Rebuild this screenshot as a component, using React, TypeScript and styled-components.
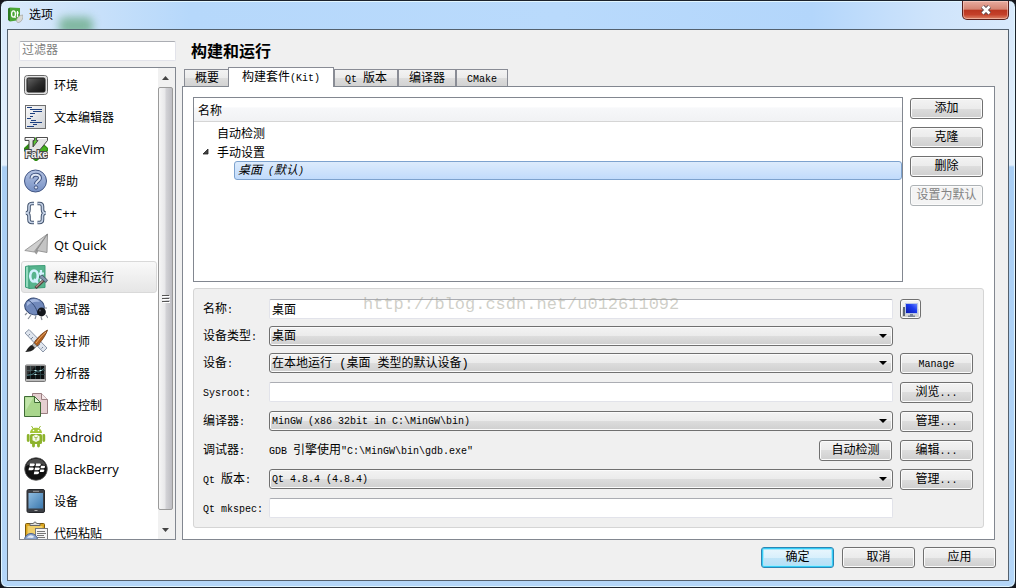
import React, { useState } from 'react';
import styled, { createGlobalStyle, css } from 'styled-components';

const CJK = '"Noto Sans CJK SC"';
const BODY_FONT = `"Liberation Mono", ${CJK}, monospace`;
const NAV_FONT = `"Open Sans", ${CJK}, sans-serif`;

const GlobalStyle = createGlobalStyle`
  *, *::before, *::after { box-sizing: border-box; }
  body { margin: 0; background: #15161c; color: #000; font: 12px/18px ${BODY_FONT}; }
  button, input, select { font: inherit; color: inherit; margin: 0; }
`;

/* ---------- mixed Chinese / Latin text ---------- */

const Latin = styled.span`
  font-size: 10px;
  white-space: pre;
`;

const isHan = (part: string) => /[\u3400-\u9fff]/.test(part);

function Mixed({ children }: { children: string }) {
  const parts = children.split(/([\u3400-\u9fff]+)/).filter(Boolean);
  return (
    <span>
      {parts.map((part, i) => (isHan(part) ? part : <Latin key={i}>{part}</Latin>))}
    </span>
  );
}

/* ---------- window frame ---------- */

const Frame = styled.div`
  display: flex;
  flex-direction: column;
  height: 100vh;
  min-height: 480px;
  min-width: 720px;
  padding: 0 6px 6px;
  border: 1px solid #1b222c;
  border-radius: 7px;
  background:
    linear-gradient(90deg, #dcebfb 0, #c9e1fa 90px, #b6d8fb 190px, #b9dafc 55%, #b3d6fb 80%, #cfe4fb 92%, #d9eafc 100%) top / 100% 28px no-repeat,
    linear-gradient(180deg, #d6e8fb 0, #e4f0fc 164px, #a9cef4 166px, #b4d6f8 100%);
  box-shadow: inset 0 0 0 1px #e2f6ff;
`;

const TitleBar = styled.header`
  position: relative;
  display: flex;
  align-items: center;
  flex: none;
  gap: 6px;
  height: 28px;
  overflow: hidden;
`;

const Smear = styled.span`
  position: absolute;
  left: 52px;
  top: 16px;
  width: 34px;
  height: 18px;
  background: #6fae8c;
  border-radius: 6px;
  filter: blur(4px);
  opacity: 0.8;
`;

const Title = styled.h1`
  position: relative;
  margin: 0;
  flex: 1;
  font: 12px/18px ${NAV_FONT};
`;

const CloseButton = styled.button`
  display: flex;
  align-items: center;
  justify-content: center;
  align-self: flex-start;
  width: 47px;
  height: 19px;
  padding: 0;
  border: 1px solid #571f1c;
  border-top: 0;
  border-radius: 0 0 5px 5px;
  background: linear-gradient(180deg, #e8aca0 0, #d58472 46%, #b93520 50%, #c4402a 75%, #dd8468 100%);
  box-shadow: inset 0 0 0 1px rgba(255, 220, 210, 0.5);
`;

const Dialog = styled.main`
  display: flex;
  flex-direction: column;
  flex: 1;
  min-height: 0;
  gap: 7px;
  padding: 11px 12px 12px 11px;
  border: 1px solid #54616e;
  background: #f0f0f0;
`;

const Body = styled.div`
  display: flex;
  flex: 1;
  min-height: 0;
  gap: 6px;
`;

const Footer = styled.footer`
  display: flex;
  flex: none;
  justify-content: flex-end;
  gap: 8px;
`;

/* ---------- controls ---------- */

const face = css`
  border: 1px solid #707070;
  border-radius: 3px;
  background: linear-gradient(180deg, #f3f3f3 0, #ebebeb 50%, #dddddd 50%, #cfcfcf 100%);
  box-shadow: inset 0 0 0 1px #fbfbfb;
`;

const Button = styled.button<{ $primary?: boolean }>`
  ${face}
  width: 73px;
  height: 21px;
  padding: 1px 0 0;
  line-height: 18px;
  white-space: nowrap;
  ${(p) =>
    p.$primary &&
    css`
      border-color: #2b86b4;
      background: linear-gradient(180deg, #eaf6fd 0, #d9f0fc 50%, #c2e5f8 50%, #b4dff6 100%);
      box-shadow: inset 0 0 0 1px #35cdf7, inset 0 0 0 2px #a5e8fb;
    `}
  &:disabled {
    border-color: #adb2b5;
    background: #f4f4f4;
    color: #838383;
  }
`;

const IconButton = styled.button`
  ${face}
  display: flex;
  align-items: center;
  justify-content: center;
  width: 21px;
  height: 20px;
  padding: 0;
`;

const TextInput = styled.input`
  width: 100%;
  height: 20px;
  padding: 0 2px;
  border: 1px solid #e2e3ea;
  border-top-color: #abadb3;
  border-radius: 2px;
  background: #fff;
  &::placeholder {
    color: #808080;
    line-height: 20px;
    opacity: 1;
  }
`;

const SelectWrap = styled.div`
  position: relative;
  height: 20px;
  svg {
    position: absolute;
    right: 6px;
    top: 8px;
    pointer-events: none;
  }
`;

const SelectBox = styled.select<{ $latin?: boolean }>`
  ${face}
  display: block;
  appearance: none;
  width: 100%;
  height: 20px;
  padding: 1px 20px 0 2px;
  font-size: ${(p) => (p.$latin ? 10 : 12)}px;
`;

function Select({ id, value, latin }: { id: string; value: string; latin?: boolean }) {
  return (
    <SelectWrap>
      <SelectBox id={id} $latin={latin} defaultValue={value}>
        <option>{value}</option>
      </SelectBox>
      <svg width="8" height="4" viewBox="0 0 8 4" aria-hidden="true">
        <path d="M0 0h8L4 4z" fill="#000" />
      </svg>
    </SelectWrap>
  );
}

/* ---------- sidebar ---------- */

const Sidebar = styled.nav`
  display: flex;
  flex-direction: column;
  flex: none;
  gap: 6px;
  width: 157px;
  min-height: 0;
`;

const ListBox = styled.div`
  display: flex;
  flex: 1;
  min-height: 0;
  border: 1px solid #828790;
  background: #fff;
  overflow: hidden;
`;

const CategoryList = styled.ul`
  flex: 1;
  margin: 0;
  padding: 1px;
  list-style: none;
`;

const Category = styled.button<{ $active: boolean; $latin: boolean }>`
  display: flex;
  align-items: center;
  gap: 6px;
  width: 100%;
  height: 32px;
  padding: 0 2px;
  border: 1px solid ${(p) => (p.$active ? '#d9d9d9' : 'transparent')};
  border-radius: 3px;
  background: ${(p) => (p.$active ? 'linear-gradient(180deg, #f9f9f9, #e6e6e6)' : 'none')};
  font-family: ${NAV_FONT};
  font-size: ${(p) => (p.$latin ? 13 : 12)}px;
  line-height: 18px;
  text-align: left;
  white-space: nowrap;
  svg { flex: none; }
  span { padding-top: ${(p) => (p.$latin ? 0 : 2)}px; }
`;

const ScrollTrack = styled.div`
  display: flex;
  flex-direction: column;
  flex: none;
  width: 17px;
  padding: 0 2px 0 0;
  background: #f1f1f1;
`;

const ScrollArrow = styled.div<{ $end?: boolean }>`
  display: flex;
  justify-content: center;
  align-items: center;
  flex: none;
  height: 19px;
  margin-top: ${(p) => (p.$end ? 10 : 0)}px;
`;

const ScrollThumb = styled.div`
  display: flex;
  align-items: center;
  justify-content: center;
  flex: 1;
  border: 1px solid #9a9a9a;
  border-radius: 2px;
  background: linear-gradient(90deg, #f6f6f6 0, #e8e8ea 45%, #d2d2d6 55%, #bdbdc2 100%);
`;

/* ---------- category icons ---------- */

const Icon = ({ children }: { children: React.ReactNode }) => (
  <svg width="24" height="24" viewBox="0 0 24 24" aria-hidden="true">
    {children}
  </svg>
);

const EnvironmentIcon = () => (
  <Icon>
    <defs>
      <linearGradient id="env" x1="0" y1="0" x2="1" y2="1">
        <stop offset="0" stopColor="#666" />
        <stop offset=".55" stopColor="#2c2c2c" />
        <stop offset="1" stopColor="#111" />
      </linearGradient>
    </defs>
    <rect x=".5" y="2.500" width="23" height="19" rx="3" fill="#cfcfcf" stroke="#666" />
    <rect x="1.500" y="3.500" width="21" height="17" rx="2" fill="none" stroke="#e4e4e4" />
    <rect x="3" y="5" width="18" height="14" rx="1.500" fill="url(#env)" stroke="#222" />
  </Icon>
);

const TextEditorIcon = () => (
  <Icon>
    <defs>
      <linearGradient id="page" x1="0" y1="0" x2="1" y2="1">
        <stop offset="0" stopColor="#fafafa" />
        <stop offset="1" stopColor="#cfd2d6" />
      </linearGradient>
    </defs>
    <rect x="1.500" y=".5" width="20" height="23" fill="url(#page)" stroke="#6f6f6f" />
    <path d="M3 2.500h5M6 4.500h12M9 6.500h9M6 8.500h5M6 11.500h3M3 13.500h4M7 15.500h5M6 17.500h12M9 19.500h4M3 21.500h7" stroke="#1f4180" strokeWidth="1.200" />
  </Icon>
);

const FakeVimIcon = () => (
  <Icon>
    <path d="M12 0L24 11v3L13 24h-2L0 14v-3z" fill="#2f8a12" />
    <path d="M12 1l4 3-6 8V3z" fill="#5cc634" />
    <path d="M20 9l3.500 3-3 3.500h-8z" fill="#46b01f" />
    <path d="M1 .5h9.500v3H9V10l5-6.500h-1.500v-3H23.500v3L12 17.500H5V3.500H1z" fill="#e4e4e4" stroke="#4d4d4d" />
    <path d="M2 1.500h7.500M14 1.500h8.500" stroke="#fff" />
    <text x="1" y="21" fontFamily="Liberation Sans" fontWeight="700" fontSize="10" fill="#f0f0f0" stroke="#484848" strokeWidth="2" paintOrder="stroke">Fake</text>
  </Icon>
);

const HelpIcon = () => (
  <Icon>
    <defs>
      <linearGradient id="help" x1="0" y1="0" x2="0" y2="1">
        <stop offset="0" stopColor="#b3c2e2" />
        <stop offset="1" stopColor="#7690c4" />
      </linearGradient>
    </defs>
    <circle cx="11.500" cy="12" r="11" fill="url(#help)" stroke="#425684" />
    <path d="M7.500 9.500c0-5 8.500-5 8.500-.5 0 3-4 3-4 6" fill="none" stroke="#3f527f" strokeWidth="4" />
    <path d="M7.500 9.500c0-5 8.500-5 8.500-.5 0 3-4 3-4 6" fill="none" stroke="#dfe6f4" strokeWidth="2" />
    <circle cx="12" cy="18.500" r="1.700" fill="#dfe6f4" stroke="#3f527f" />
  </Icon>
);

const braces =
  'M10 2.500H8C5.500 2.500 5 4 5 5.500v3C5 10.500 4 12 1.800 12 4 12 5 13.500 5 15.500v3C5 20 5.500 21.500 8 21.500h2M13.500 2.500h2c2.500 0 3 1.500 3 3v3c0 2 1 3.500 3.200 3.500-2.200 0-3.200 1.500-3.200 3.500v3c0 1.500-.5 3-3 3h-2';

const CppIcon = () => (
  <Icon>
    <path d={braces} fill="none" stroke="#43546e" strokeWidth="3.600" />
    <path d={braces} fill="none" stroke="#c6d2e6" strokeWidth="1.600" />
  </Icon>
);

const QuickIcon = () => (
  <Icon>
    <path d="M23.500 1L.8 17.500l9.200 1.500z" fill="#cfcfcf" stroke="#8a8a8a" strokeWidth=".8" />
    <path d="M23.500 1L10 19l2.500 2.500z" fill="#9a9a9a" />
    <path d="M23.500 1L12.500 17.500l10.500 2z" fill="#c4c4c4" stroke="#848484" strokeWidth=".8" />
  </Icon>
);

const BuildIcon = () => (
  <Icon>
    <path d="M1.500 1.500L5 .8v22.400l-3.500-1z" fill="#92dcbd" stroke="#3a9b78" />
    <path d="M5 1l16-.5v22L5 23.500z" fill="#57b48d" stroke="#3f9d78" />
    <ellipse cx="10" cy="11" rx="3.800" ry="5.500" fill="none" stroke="#d4f2ff" strokeWidth="2.600" />
    <path d="M10 14l4 4M17 5v11M15 8.500h5" stroke="#d4f2ff" strokeWidth="2.200" />
    <path d="M21.500 13.500L11.500 23" stroke="#54423f" strokeWidth="3" />
    <path d="M20.500 14l-8.500 8" stroke="#b3928b" strokeWidth="1.200" />
    <path d="M15 12l3-2 5.500 5-1.500 2.500z" fill="#8397ad" stroke="#3f4d5e" strokeWidth=".8" />
  </Icon>
);

const DebuggerIcon = () => (
  <Icon>
    <path d="M3 16l-2 2M7 18l-3 4M12 19l-1 3M21 11h2M22 18l2 3M17 20l1 3" stroke="#858b95" strokeWidth="1.200" />
    <ellipse cx="10.500" cy="9.500" rx="9.800" ry="8.300" fill="#7189bb" stroke="#30456f" transform="rotate(12 10.500 9.500)" />
    <path d="M3 6c4-5 10-5 13-1-5-1-9 0-13 4z" fill="#a5b8df" />
    <path d="M4 3c5 3 8 7 10 14" fill="none" stroke="#344a78" />
    <circle cx="17.500" cy="15" r="4.400" fill="#14171d" />
    <circle cx="16" cy="13.500" r="1" fill="#556" />
  </Icon>
);

const DesignerIcon = () => (
  <Icon>
    <path d="M1 4l4-3.500L23 19l-4 4z" fill="#dfe5ee" stroke="#8b96a8" />
    <path d="M6 5L4.500 6.500M9 8l-2 2M12 11l-1.500 1.500M16 15l-2 2M19 18l-1.500 1.500" stroke="#7a8698" />
    <path d="M23.500 1C18 4 13 9 10 14l3 3c4-4 9-11 10.500-16z" fill="#b0601f" stroke="#6d3711" strokeWidth=".8" />
    <path d="M22 3c-4 3-7 7-10 11" stroke="#e9a869" fill="none" />
    <path d="M10 14l3 3-2 2-3-3z" fill="#b9b9b9" stroke="#666" strokeWidth=".6" />
    <path d="M8 16l3 3c-2 3-6 4-10 4 2-1 3-6 7-7z" fill="#222" />
  </Icon>
);

const AnalyzerIcon = () => (
  <Icon>
    <rect x="1.500" y="4" width="20" height="16.500" rx="1" fill="#b9b9b9" stroke="#777" />
    <rect x="2.500" y="5" width="18" height="13" fill="#0c0f10" />
    <path d="M6.500 5v13M11.500 5v13M16.500 5v13M3 9.500h18M3 13.500h18" stroke="#2f474a" strokeWidth=".8" />
    <path d="M3 14.500l5-1 4-3 3 .5 5-3.500" fill="none" stroke="#5b9aa0" strokeWidth=".7" />
    <path d="M10.500 9.500h2M15.500 9.500h2M10.500 13.500h2" stroke="#c6eef0" />
    <path d="M3 5h9L3 14z" fill="#fff" opacity=".16" />
  </Icon>
);

const VersionIcon = () => (
  <Icon>
    <path d="M8.500.5h9l6 6v14h-15z" fill="#e6cfd1" stroke="#9b7f82" />
    <path d="M17.500.5v6h6" fill="#f5e8e9" stroke="#9b7f82" />
    <path d="M.5 3.500h10l6 6v14H.5z" fill="#a9d68c" stroke="#3f6b35" />
    <path d="M1.500 4.500h8L1.500 18z" fill="#c2e5aa" />
    <path d="M10.500 3.500v6h6z" fill="#e2f5d6" stroke="#3f6b35" />
  </Icon>
);

const AndroidIcon = () => (
  <Icon>
    <path d="M7.500 1l2 3M16.500 1l-2 3" stroke="#95b93a" />
    <path d="M6 8c0-7 12-7 12 0z" fill="#a4c639" />
    <circle cx="9.500" cy="5.500" r=".8" fill="#fff" />
    <circle cx="14.500" cy="5.500" r=".8" fill="#fff" />
    <rect x="6" y="9" width="12" height="10" rx="1.500" fill="#8db32c" />
    <path d="M4.200 10.500v5M19.800 10.500v5M9.500 18v3M14.500 18v3" stroke="#8db32c" strokeWidth="2.800" strokeLinecap="round" />
    <path d="M12 9.500l3.500 1.700v4L12 17l-3.500-1.800v-4z" fill="#f4f8ea" />
    <path d="M10 11.800l2 1 2-1M12 12.800v2.500" fill="none" stroke="#8db32c" strokeWidth=".8" />
  </Icon>
);

const BlackBerryIcon = () => (
  <Icon>
    <circle cx="12" cy="12" r="11.300" fill="#111" stroke="#555" strokeWidth=".8" />
    <path d="M2 9a10.500 10.500 0 0 1 20 0c-5-3-15-3-20 0z" fill="#4b4b4b" />
    <path
      fill="#fff"
      d="M6 6.500h3.500q1.500 0 1.300 1.300T9 9.300H5.500zM12 6.500h3.500q1.500 0 1.300 1.300T15 9.300h-3.500zM5 10.500h3.500q1.500 0 1.300 1.300T8 13.300H4.500zM11 10.500h3.500q1.500 0 1.300 1.300T14 13.300h-3.500zM17 8.800h3q1.300 0 1 1.200T19.500 11.300h-3zM16.300 12.500h3q1.300 0 1 1.200T18.800 15h-3zM10.300 14.500h3.500q1.500 0 1.300 1.300T13.300 17.300H9.800z"
    />
  </Icon>
);

const DeviceIcon = () => (
  <Icon>
    <defs>
      <linearGradient id="dev" x1="0" y1="0" x2="1" y2="1">
        <stop offset="0" stopColor="#8fbce0" />
        <stop offset="1" stopColor="#3b78ae" />
      </linearGradient>
    </defs>
    <rect x="3" y=".5" width="17.500" height="23" rx="1.500" fill="#3c3f45" stroke="#26282c" />
    <rect x="4.500" y="4" width="14.500" height="15.500" fill="url(#dev)" />
    <path d="M9 2.300h6" stroke="#999" />
    <path d="M10.500 21.500h3" stroke="#aaa" />
  </Icon>
);

const PasteIcon = () => (
  <Icon>
    <rect x="1.500" y="2.500" width="19" height="20" rx="1" fill="#dba620" stroke="#7b5a0c" />
    <rect x="3.500" y="5" width="15" height="16" fill="#f0cf6b" />
    <path d="M6 4.500h10V2.500h-3L11 .8 9 2.500H6z" fill="#ddd" stroke="#666" />
    <rect x="11.500" y="7.500" width="12" height="16" fill="#f6f6f6" stroke="#777" />
    <path d="M13 10.500h8M13 12.500h9M13 14.500h7M13 16.500h8" stroke="#777" />
    <circle cx="7" cy="19" r="6.500" fill="#8aa3cb" stroke="#4a5f8c" />
    <path d="M3 17c2-4 6-3 7-1-2 2-4 0-7 1z" fill="#e3ebf7" />
  </Icon>
);

const WindowIcon = () => (
  <svg width="16" height="16" viewBox="0 0 16 16" aria-hidden="true">
    <path d="M1 1.500L3 .5v14l-2-1.500z" fill="#2c7b23" />
    <path d="M3 .5L13 1v12L3 14.500z" fill="#4ba635" />
    <ellipse cx="6.500" cy="7" rx="1.900" ry="3.200" fill="none" stroke="#fff" strokeWidth="1.300" />
    <path d="M7 9l1.500 2M10.500 4v6M9.500 6h2.500" stroke="#fff" strokeWidth="1.200" />
    <path d="M16 8c-4 0-6 3-6.500 5 0 2 1 3 2.500 2.500 3-1 4-4 4-7.500z" fill="#d9d9d4" stroke="#9a9a94" strokeWidth=".6" />
  </svg>
);

const MonitorIcon = () => (
  <svg width="15" height="15" viewBox="0 0 15 15" aria-hidden="true">
    <defs>
      <linearGradient id="screen" x1="0" y1="1" x2="1" y2="0">
        <stop offset="0" stopColor="#0717a8" />
        <stop offset=".6" stopColor="#1e3df0" />
        <stop offset="1" stopColor="#6f8cff" />
      </linearGradient>
    </defs>
    <rect x="0" y="5" width="2" height="9" fill="#5d6673" />
    <rect x="2.500" y="1.500" width="12" height="10" fill="url(#screen)" stroke="#b9c6e4" />
    <path d="M7 12h3v1.500h2V15H5v-1.500h2z" fill="#7c8796" />
  </svg>
);

const categories = [
  { label: '环境', icon: <EnvironmentIcon /> },
  { label: '文本编辑器', icon: <TextEditorIcon /> },
  { label: 'FakeVim', icon: <FakeVimIcon /> },
  { label: '帮助', icon: <HelpIcon /> },
  { label: 'C++', icon: <CppIcon /> },
  { label: 'Qt Quick', icon: <QuickIcon /> },
  { label: '构建和运行', icon: <BuildIcon /> },
  { label: '调试器', icon: <DebuggerIcon /> },
  { label: '设计师', icon: <DesignerIcon /> },
  { label: '分析器', icon: <AnalyzerIcon /> },
  { label: '版本控制', icon: <VersionIcon /> },
  { label: 'Android', icon: <AndroidIcon /> },
  { label: 'BlackBerry', icon: <BlackBerryIcon /> },
  { label: '设备', icon: <DeviceIcon /> },
  { label: '代码粘贴', icon: <PasteIcon /> },
];

/* ---------- main column ---------- */

const Main = styled.section`
  display: flex;
  flex-direction: column;
  flex: 1;
  min-width: 0;
  margin-right: 1px;
`;

const Heading = styled.h2`
  flex: none;
  height: 20px;
  margin: 0 0 6px;
  padding-left: 9px;
  font: bold 16px/18px ${CJK}, sans-serif;
`;

const Tabs = styled.div`
  display: flex;
  align-items: flex-end;
  flex: none;
  height: 19px;
  padding-left: 2px;
`;

const Tab = styled.button<{ $active: boolean }>`
  height: 17px;
  padding: 1px 10px 0;
  border: 1px solid #898c95;
  border-bottom: 0;
  background: linear-gradient(180deg, #f3f3f3 0, #ebebeb 50%, #dddddd 50%, #d2d2d2 100%);
  line-height: 16px;
  white-space: nowrap;
  ${(p) =>
    p.$active &&
    css`
      position: relative;
      z-index: 1;
      height: 20px;
      margin: 0 0 -1px -2px;
      padding: 0 13px;
      background: #fff;
      line-height: 20px;
    `}
`;

const Pane = styled.div`
  display: flex;
  flex-direction: column;
  flex: 1;
  min-height: 0;
  gap: 6px;
  padding: 10px 10px 11px;
  border: 1px solid #828790;
  background: #fff;
`;

const KitArea = styled.div`
  display: flex;
  flex: 1;
  min-height: 0;
  gap: 7px;
  padding-right: 1px;
`;

const Tree = styled.div`
  flex: 1;
  border: 1px solid #828790;
  overflow: hidden;
  font-family: ${CJK}, sans-serif;
`;

const TreeHeader = styled.div`
  height: 24px;
  margin-bottom: 1px;
  padding-left: 4px;
  border-bottom: 1px solid #d5d5d5;
  background: linear-gradient(180deg, #fff 0, #fff 40%, #f7f8fa 42%, #f1f2f4 100%);
  line-height: 24px;
`;

const TreeRow = styled.div<{ $level: number; $selected?: boolean }>`
  display: flex;
  align-items: center;
  height: 19px;
  margin-left: ${(p) => (p.$level > 1 ? 40 : 0)}px;
  padding-left: ${(p) => (p.$level > 1 ? 3 : 8)}px;
  ${(p) =>
    p.$selected &&
    css`
      padding-top: 2px;
      border: 1px solid #7da2ce;
      border-radius: 3px;
      background: linear-gradient(180deg, #dcebfc, #c1dbfc);
      font-family: ${BODY_FONT};
      font-style: italic;
    `}
`;

const Twisty = styled.span`
  display: flex;
  width: 15px;
`;

const ActionColumn = styled.div`
  display: flex;
  flex-direction: column;
  gap: 8px;
  padding-top: 1px;
`;

const KitForm = styled.form`
  position: relative;
  display: grid;
  grid-template-columns: 59px minmax(0, 1fr) 73px;
  grid-auto-rows: 22px;
  grid-template-rows: 20px 20px;
  gap: 7px;
  flex: none;
  padding: 10px 10px 7px 9px;
  border: 1px solid #d5d5d5;
  border-radius: 3px;
  background: #f0f0f0;
`;

const Label = styled.label`
  grid-column: 1;
  line-height: 22px;
  white-space: nowrap;
`;

const DebuggerLine = styled.div`
  display: flex;
  justify-content: space-between;
  padding-right: 1px;
  line-height: 22px;
  white-space: nowrap;
`;

const Watermark = styled.span`
  position: absolute;
  left: 169px;
  top: 6px;
  color: rgba(160, 160, 145, 0.5);
  font-size: 17px;
  line-height: 20px;
  pointer-events: none;
`;

const tabs = ['概要', '构建套件(Kit)', 'Qt 版本', '编译器', 'CMake'];

export default function App() {
  const [category, setCategory] = useState('构建和运行');
  const [tab, setTab] = useState('构建套件(Kit)');

  return (
    <>
      <GlobalStyle />
      <Frame>
        <TitleBar>
          <Smear />
          <WindowIcon />
          <Title>选项</Title>
          <CloseButton aria-label="关闭">
            <svg width="12" height="10" viewBox="0 0 12 10" aria-hidden="true">
              <path d="M2.500 1.500l7 7M9.500 1.500l-7 7" stroke="#5b4a50" strokeWidth="4.400" />
              <path d="M2.500 1.500l7 7M9.500 1.500l-7 7" stroke="#fff" strokeWidth="2.600" />
            </svg>
          </CloseButton>
        </TitleBar>
        <Dialog>
          <Body>
            <Sidebar>
              <TextInput aria-label="过滤器" placeholder="过滤器" />
              <ListBox>
                <CategoryList>
                  {categories.map(({ label, icon }) => (
                    <li key={label}>
                      <Category
                        type="button"
                        $active={label === category}
                        $latin={!isHan(label)}
                        onClick={() => setCategory(label)}
                      >
                        {icon}
                        <span>{label}</span>
                      </Category>
                    </li>
                  ))}
                </CategoryList>
                <ScrollTrack>
                  <ScrollArrow>
                    <svg width="7" height="4" viewBox="0 0 7 4" aria-hidden="true">
                      <path d="M0 4h7L3.500 0z" fill="#444" />
                    </svg>
                  </ScrollArrow>
                  <ScrollThumb>
                    <svg width="8" height="8" viewBox="0 0 8 8" aria-hidden="true">
                      <path d="M0 .5h7M0 3.500h7M0 6.500h7" stroke="#555" />
                      <path d="M1 1.500h7M1 4.500h7M1 7.500h7" stroke="#fff" />
                    </svg>
                  </ScrollThumb>
                  <ScrollArrow $end>
                    <svg width="7" height="4" viewBox="0 0 7 4" aria-hidden="true">
                      <path d="M0 0h7L3.500 4z" fill="#444" />
                    </svg>
                  </ScrollArrow>
                </ScrollTrack>
              </ListBox>
            </Sidebar>

            <Main>
              <Heading>构建和运行</Heading>
              <Tabs role="tablist">
                {tabs.map((name) => (
                  <Tab
                    key={name}
                    type="button"
                    role="tab"
                    aria-selected={name === tab}
                    $active={name === tab}
                    onClick={() => setTab(name)}
                  >
                    <Mixed>{name}</Mixed>
                  </Tab>
                ))}
              </Tabs>
              <Pane>
                <KitArea>
                  <Tree>
                    <TreeHeader>名称</TreeHeader>
                    <TreeRow $level={1}>
                      <Twisty />
                      自动检测
                    </TreeRow>
                    <TreeRow $level={1}>
                      <Twisty>
                        <svg width="7" height="7" viewBox="0 0 7 7" aria-hidden="true">
                          <path d="M6 1v5H1z" fill="#444" stroke="#222" strokeWidth=".8" />
                        </svg>
                      </Twisty>
                      手动设置
                    </TreeRow>
                    <TreeRow $level={2} $selected>
                      <Mixed>桌面 (默认)</Mixed>
                    </TreeRow>
                  </Tree>
                  <ActionColumn>
                    <Button type="button">添加</Button>
                    <Button type="button">克隆</Button>
                    <Button type="button">删除</Button>
                    <Button type="button" disabled>设置为默认</Button>
                  </ActionColumn>
                </KitArea>

                <KitForm onSubmit={(e) => e.preventDefault()}>
                  <Label htmlFor="kit-name"><Mixed>名称:</Mixed></Label>
                  <TextInput id="kit-name" defaultValue="桌面" />
                  <IconButton type="button" aria-label="图标"><MonitorIcon /></IconButton>

                  <Label htmlFor="device-type"><Mixed>设备类型:</Mixed></Label>
                  <Select id="device-type" value="桌面" />

                  <Label htmlFor="device"><Mixed>设备:</Mixed></Label>
                  <Select id="device" value="在本地运行 (桌面 类型的默认设备)" />
                  <Button type="button"><Mixed>Manage</Mixed></Button>

                  <Label htmlFor="sysroot"><Mixed>Sysroot:</Mixed></Label>
                  <TextInput id="sysroot" />
                  <Button type="button"><Mixed>浏览...</Mixed></Button>

                  <Label htmlFor="compiler"><Mixed>编译器:</Mixed></Label>
                  <Select id="compiler" latin value="MinGW (x86 32bit in C:\MinGW\bin)" />
                  <Button type="button"><Mixed>管理...</Mixed></Button>

                  <Label htmlFor="detect"><Mixed>调试器:</Mixed></Label>
                  <DebuggerLine>
                    <Mixed>{'GDB 引擎使用"C:\\MinGW\\bin\\gdb.exe"'}</Mixed>
                    <Button id="detect" type="button">自动检测</Button>
                  </DebuggerLine>
                  <Button type="button"><Mixed>编辑...</Mixed></Button>

                  <Label htmlFor="qt-version"><Mixed>Qt 版本:</Mixed></Label>
                  <Select id="qt-version" latin value="Qt 4.8.4 (4.8.4)" />
                  <Button type="button"><Mixed>管理...</Mixed></Button>

                  <Label htmlFor="mkspec"><Mixed>Qt mkspec:</Mixed></Label>
                  <TextInput id="mkspec" />

                  <Watermark>http://blog.csdn.net/u012611092</Watermark>
                </KitForm>
              </Pane>
            </Main>
          </Body>
          <Footer>
            <Button type="button" $primary>确定</Button>
            <Button type="button">取消</Button>
            <Button type="button">应用</Button>
          </Footer>
        </Dialog>
      </Frame>
    </>
  );
}
